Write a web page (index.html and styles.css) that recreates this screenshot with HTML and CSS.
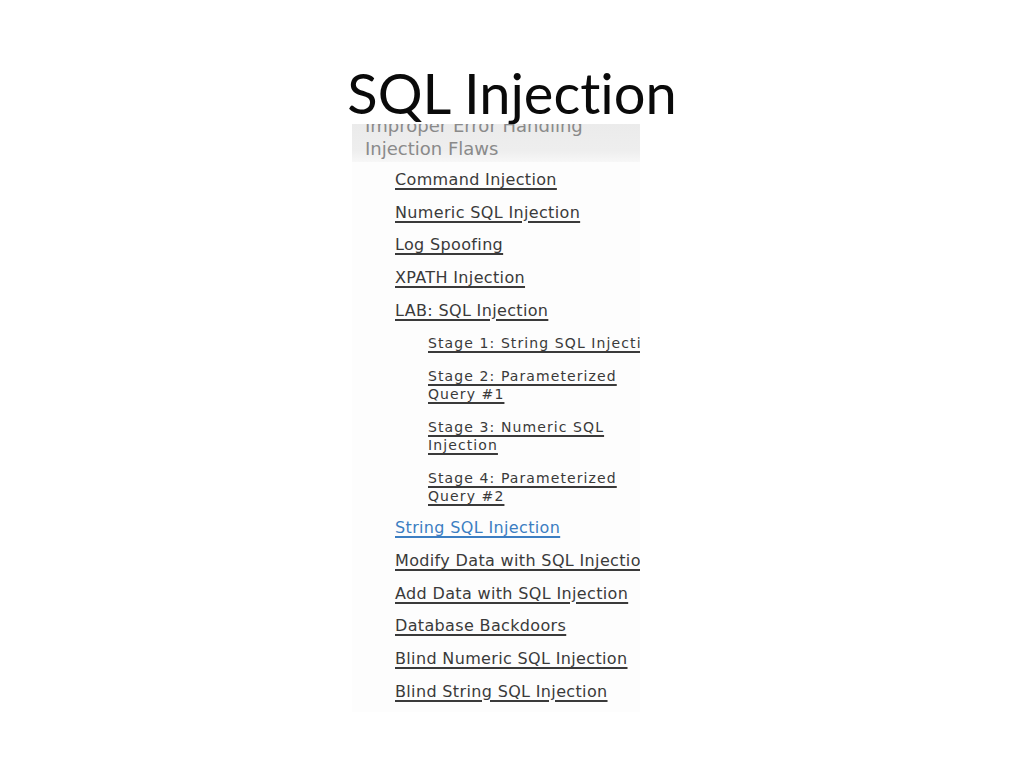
FILE: index.html
```html
<!DOCTYPE html>
<html lang="en">
<head>
<meta charset="utf-8">
<title>SQL Injection</title>
<link rel="stylesheet" href="styles.css">
</head>
<body>
<div class="slide">
  <h1 class="title">SQL Injection</h1>
  <div class="shot">
    <div class="band">
      <div class="band-line">Improper Error Handling</div>
      <div class="band-line">Injection Flaws</div>
    </div>
    <ul class="menu">
      <li><a class="link">Command Injection</a></li>
      <li><a class="link">Numeric SQL Injection</a></li>
      <li><a class="link">Log Spoofing</a></li>
      <li><a class="link">XPATH Injection</a></li>
      <li><a class="link">LAB: SQL Injection</a></li>
      <li class="stage"><a class="link">Stage 1: String SQL Injection</a></li>
      <li class="stage"><a class="link">Stage 2: Parameterized<br>Query #1</a></li>
      <li class="stage"><a class="link">Stage 3: Numeric SQL<br>Injection</a></li>
      <li class="stage"><a class="link">Stage 4: Parameterized<br>Query #2</a></li>
      <li><a class="link current">String SQL Injection</a></li>
      <li><a class="link">Modify Data with SQL Injection</a></li>
      <li><a class="link">Add Data with SQL Injection</a></li>
      <li><a class="link">Database Backdoors</a></li>
      <li><a class="link">Blind Numeric SQL Injection</a></li>
      <li><a class="link">Blind String SQL Injection</a></li>
    </ul>
  </div>
</div>
</body>
</html>
```

FILE: styles.css
```css
html, body {
  margin: 0;
  padding: 0;
  background: #ffffff;
}

.slide {
  width: 1024px;
  height: 768px;
  overflow: hidden;
  display: flex;
  flex-direction: column;
}

.title {
  margin: 0;
  padding-top: 68px;
  height: 50px;
  line-height: 50px;
  text-align: center;
  font-family: "Lato", "Open Sans", sans-serif;
  font-weight: 400;
  font-size: 56px;
  font-variant-ligatures: none;
  color: #0a0a0a;
}

.shot {
  margin-top: 6px;
  margin-left: 352px;
  width: 288px;
  height: 588px;
  overflow: hidden;
  background: #fdfdfd;
  font-family: "DejaVu Sans", Verdana, sans-serif;
}

.band {
  height: 38px;
  overflow: hidden;
  background: linear-gradient(to bottom, #ebebeb 0%, #eeeeee 70%, #f7f7f7 100%);
  padding-left: 13px;
  color: #8a8a8a;
  font-size: 18px;
}

.band-line {
  line-height: 23px;
  white-space: nowrap;
}

.band-line:first-child {
  margin-top: -10px;
}

.menu {
  list-style: none;
  margin: 0;
  padding: 9px 0 0 43px;
  display: flex;
  flex-direction: column;
  gap: 14.7px;
}

.menu li {
  white-space: nowrap;
  line-height: 18px;
}

.link {
  font-size: 16px;
  letter-spacing: 0.35px;
  color: #3a3a3a;
  text-decoration: underline;
  text-decoration-thickness: 2px;
  text-underline-offset: 3px;
}

.stage {
  padding-left: 33px;
}

.stage .link {
  font-size: 14px;
  letter-spacing: 1.1px;
}

.link.current {
  color: #3c7ec2;
}
```
